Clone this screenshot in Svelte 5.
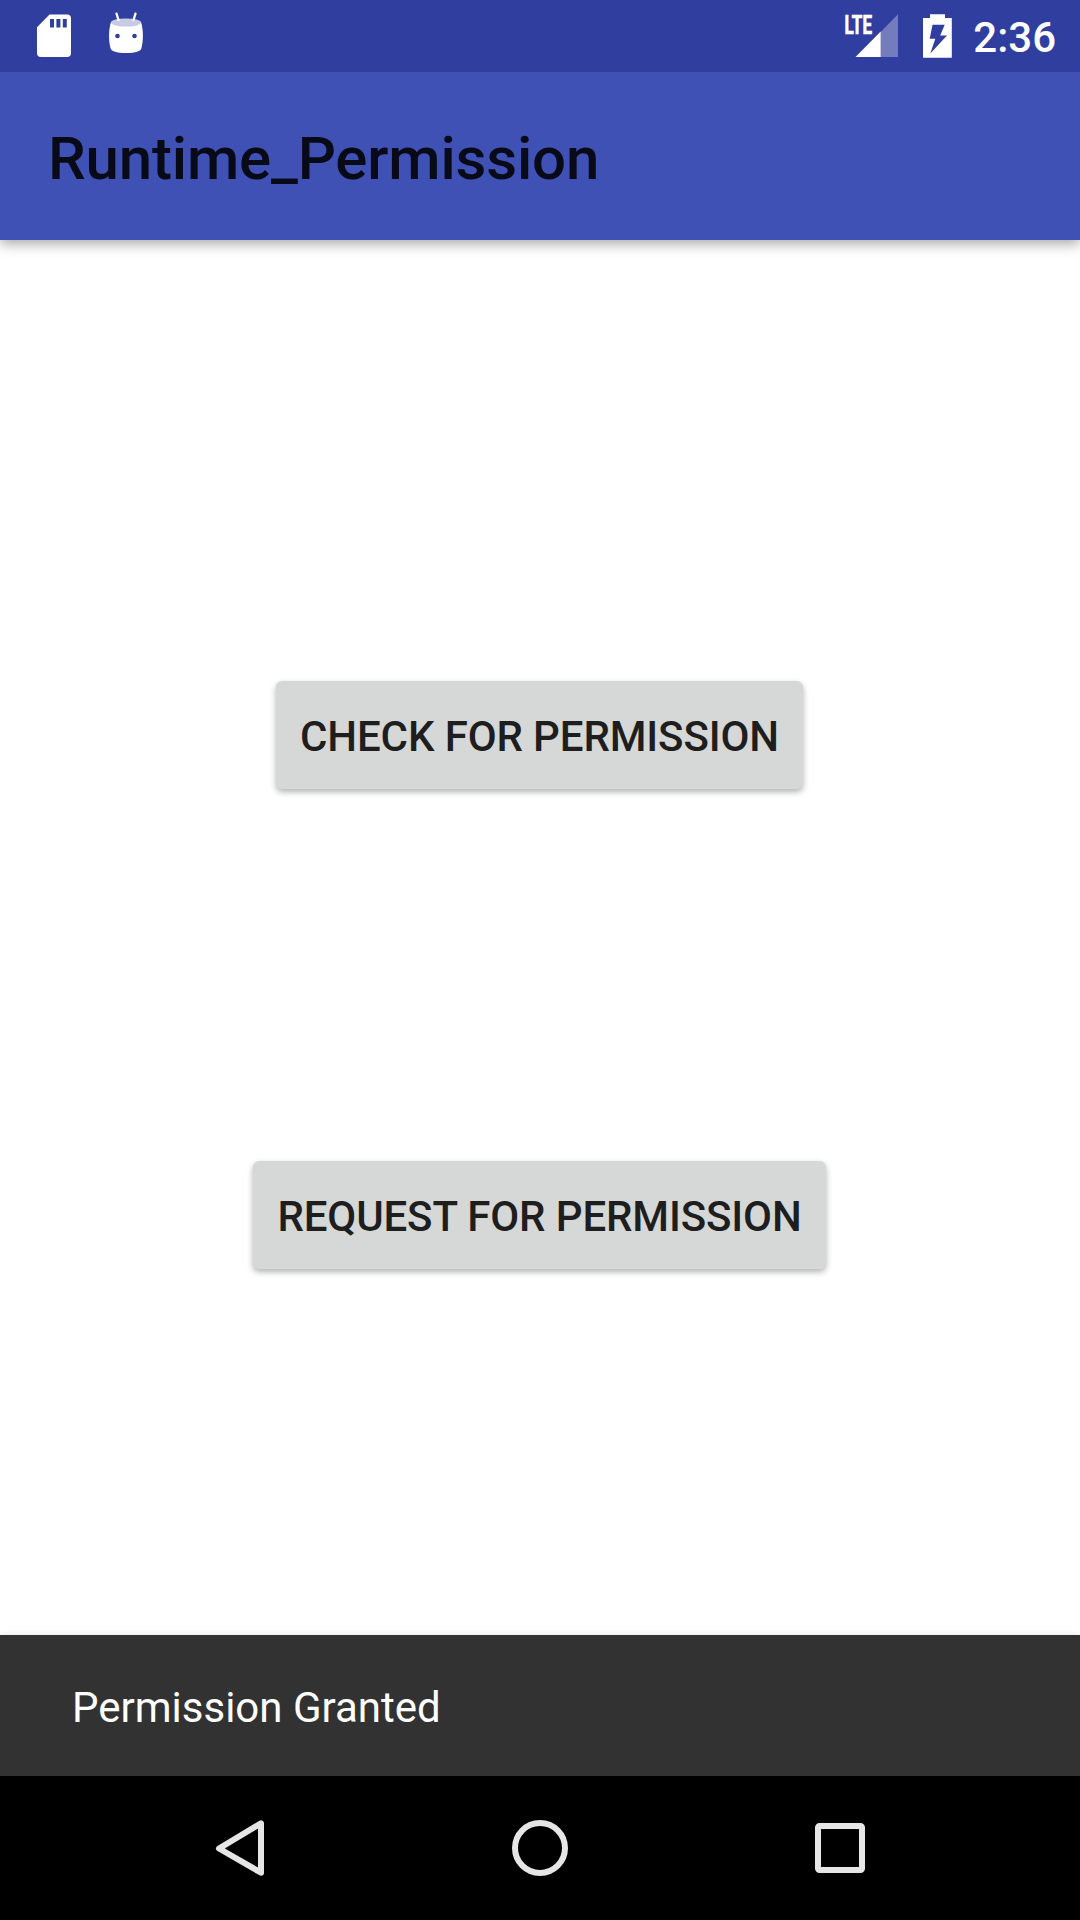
<script>
  const actions = ['Check for permission', 'Request for permission'];
</script>

<div class="screen">
  <header class="status">
    <svg class="notifications" width="160" height="72" viewBox="0 0 160 72" aria-hidden="true">
      <path fill="#fff" fill-rule="evenodd" d="M49.5 14.6H67a4 4 0 0 1 4 4V53a4 4 0 0 1-4 4H41a4 4 0 0 1-4-4V27.3ZM50 19v8.5h4V19Zm6.4 0v8.5h4V19Zm6.4 0v8.5h4V19Z" />
      <path fill="#fff" d="M111 22C108.500 30 108.500 40 110.500 48Q111.500 53 126 53T141.500 48C143.500 40 143.500 30 141 22Z" />
      <ellipse cx="126" cy="22.500" rx="15" ry="4.100" fill="#c8cbe4" />
      <path d="m116.500 13.700 2 6.300m17-6.300-2 6.300" stroke="#fff" stroke-width="2.300" stroke-linecap="round" />
      <circle cx="117.500" cy="36" r="2.300" fill="#303f9f" />
      <circle cx="134.500" cy="36" r="2.300" fill="#303f9f" />
    </svg>
    <div class="system">
      <svg width="120" height="72" viewBox="840 0 120 72" aria-hidden="true">
        <text class="lte" x="844.500" y="34" textLength="27.500" lengthAdjust="spacingAndGlyphs">LTE</text>
        <path fill="#737dbd" d="M880.700 31.900 898 14.200V57H880.700Z" />
        <path fill="#fff" d="M855.500 57 880.700 31.500V57Z" />
        <path fill="#fff" fill-rule="evenodd" d="M930 14.300h15V18h6.800v39.800H923V18h7ZM932.500 24.800H944.700L940.200 35.400H947L930.300 53.500 935.300 38.800H929.700Z" />
      </svg>
      <time>2:36</time>
    </div>
  </header>

  <div class="toolbar"><h1>Runtime_Permission</h1></div>

  <main>
    {#each actions as action}
      <button>{action}</button>
    {/each}
  </main>

  <div class="snackbar" role="status">Permission Granted</div>

  <nav>
    <svg width="1080" height="144" viewBox="0 1776 1080 144" fill="none" stroke="#e6e6e6" stroke-width="6" stroke-linejoin="round">
      <path d="M219 1848.500 261 1823.300V1872.700Z" />
      <circle cx="540" cy="1848" r="25" />
      <rect x="818" y="1826" width="44" height="44" rx="1.500" />
    </svg>
  </nav>
</div>

<style>
  :global(body) {
    margin: 0;
  }
  .screen {
    width: 1080px;
    height: 1920px;
    display: flex;
    flex-direction: column;
    overflow: hidden;
    background: #fff;
    font-family: Roboto, sans-serif;
  }
  svg {
    display: block;
  }
  .status {
    height: 72px;
    flex: none;
    display: flex;
    justify-content: space-between;
    background: #303f9f;
    z-index: 2;
  }
  .system {
    display: flex;
    padding-right: 24px;
  }
  .system svg {
    margin-right: 12px;
  }
  .lte {
    font-size: 26px;
    font-weight: 700;
    fill: #fff;
    stroke: #fff;
    stroke-width: 0.7px;
  }
  time {
    width: 84px;
    font-size: 42px;
    line-height: 76px;
    font-weight: 500;
    color: #fff;
    text-align: right;
  }
  .toolbar {
    height: 168px;
    flex: none;
    display: flex;
    align-items: center;
    padding-left: 48px;
    background: #3f51b5;
    box-shadow: 0 4px 12px rgba(0, 0, 0, 0.34);
    z-index: 1;
  }
  h1 {
    margin: 0;
    padding-top: 6px;
    font-size: 60px;
    line-height: 70px;
    font-weight: 500;
    letter-spacing: -0.18px;
    color: #080a17;
  }
  main {
    flex: 1;
    display: flex;
    flex-direction: column;
    align-items: center;
    gap: 372px;
    padding: 441px 1px 0 0;
    box-sizing: border-box;
  }
  button {
    height: 108px;
    padding: 4px 24px 0;
    border: 0;
    border-radius: 6px;
    background: #d6d7d7;
    box-shadow: 0 3px 6px rgba(0, 0, 0, 0.3);
    font: 500 42px/50px Roboto, sans-serif;
    letter-spacing: -0.12px;
    text-transform: uppercase;
    white-space: nowrap;
    color: #1e1e1e;
  }
  .snackbar {
    height: 141px;
    flex: none;
    padding-left: 72px;
    padding-top: 2px;
    box-sizing: border-box;
    background: #323232;
    box-shadow: 0 0 6px rgba(0, 0, 0, 0.12);
    font-size: 42px;
    line-height: 141px;
    color: #fff;
  }
  nav {
    height: 144px;
    flex: none;
    background: #000;
    z-index: 1;
  }
</style>
